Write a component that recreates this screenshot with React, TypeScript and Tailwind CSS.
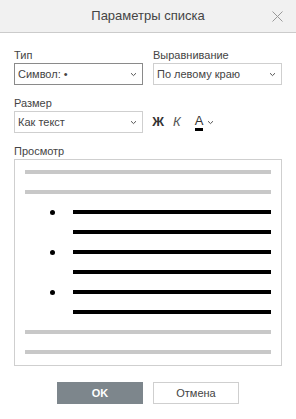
import React from 'react';

const Chevron: React.FC = () => (
  <svg width="7" height="5" viewBox="0 0 7 5" className="shrink-0">
    <path d="M1 1.2 L3.5 3.6 L6 1.2" fill="none" stroke="#555" strokeWidth="1" />
  </svg>
);

const Select: React.FC<{ value: string; focused?: boolean }> = ({ value, focused }) => (
  <div
    className={
      focused
        ? 'h-[22px] border border-[#8a8a8a] bg-white flex items-center justify-between pl-[3px] pr-[5px] text-[11px] text-[#444]'
        : 'h-[22px] border border-[#cfcfcf] bg-white flex items-center justify-between pl-[3px] pr-[5px] text-[11px] text-[#444]'
    }
  >
    <span>{value}</span>
    <Chevron />
  </div>
);

const Bar: React.FC<{ grey?: boolean; bullet?: boolean }> = ({ grey, bullet }) => (
  <div className="h-[20px] flex items-center">
    {grey ? (
      <div className="ml-[10px] w-[246px] h-[4px] bg-[#c8c8c8]" />
    ) : (
      <>
        <div className="w-[48px] flex justify-end pr-[8px]">
          {bullet && <div className="w-[5px] h-[5px] rounded-full bg-black" />}
        </div>
        <div className="ml-[10px] w-[198px] h-[4px] bg-black" />
      </>
    )}
  </div>
);

const App: React.FC = () => {
  return (
    <div className="w-[296px] h-[419px] bg-white font-['Liberation_Sans',Arial,sans-serif] text-[#444] overflow-hidden">
      <div className="h-[33px] bg-[#f1f1f1] border-b border-[#cbcbcb] flex items-center justify-center relative">
        <span className="text-[13px] text-[#444]">Параметры списка</span>
        <svg width="11" height="11" viewBox="0 0 11 11" className="absolute right-[13px] top-[11px]">
          <path d="M0.5 0.5 L10.5 10.5 M10.5 0.5 L0.5 10.5" stroke="#999" strokeWidth="1" />
        </svg>
      </div>

      <div className="px-[14px] pt-[15px]">
        <div className="grid grid-cols-2 gap-x-[10px]">
          <div>
            <div className="text-[11px] leading-[14px] mb-[1px]">Тип</div>
            <Select value="Символ: •" focused />
          </div>
          <div>
            <div className="text-[11px] leading-[14px] mb-[1px]">Выравнивание</div>
            <Select value="По левому краю" />
          </div>
        </div>

        <div className="grid grid-cols-2 gap-x-[10px] mt-[11px]">
          <div>
            <div className="text-[11px] leading-[14px] mb-[1px]">Размер</div>
            <Select value="Как текст" />
          </div>
          <div className="flex items-end">
            <div className="h-[22px] flex items-center text-[#333]">
              <span className="w-[14px] text-[13px] font-bold ml-[-2px] text-center">Ж</span>
              <span className="ml-[8px] text-[13px] italic text-[#555]">К</span>
              <span className="ml-[14px] text-[13px] text-[#333] leading-[13px] border-b-[3px] border-black pb-[1px]">А</span>
              <span className="ml-[4px]"><Chevron /></span>
            </div>
          </div>
        </div>

        <div className="text-[11px] leading-[14px] mt-[11px] mb-[1px]">Просмотр</div>
        <div className="h-[207px] border border-[#cfcfcf] pt-[2px]">
          <Bar grey />
          <Bar grey />
          <Bar bullet />
          <Bar />
          <Bar bullet />
          <Bar />
          <Bar bullet />
          <Bar />
          <Bar grey />
          <Bar grey />
        </div>

        <div className="flex justify-center gap-[10px] mt-[16px] -mx-[14px]">
          <div className="w-[86px] h-[22px] bg-[#7d868c] text-white text-[11px] font-bold flex items-center justify-center">OK</div>
          <div className="w-[86px] h-[22px] border border-[#cfcfcf] bg-white text-[#444] text-[11px] flex items-center justify-center">Отмена</div>
        </div>
      </div>
    </div>
  );
};

export default App;
